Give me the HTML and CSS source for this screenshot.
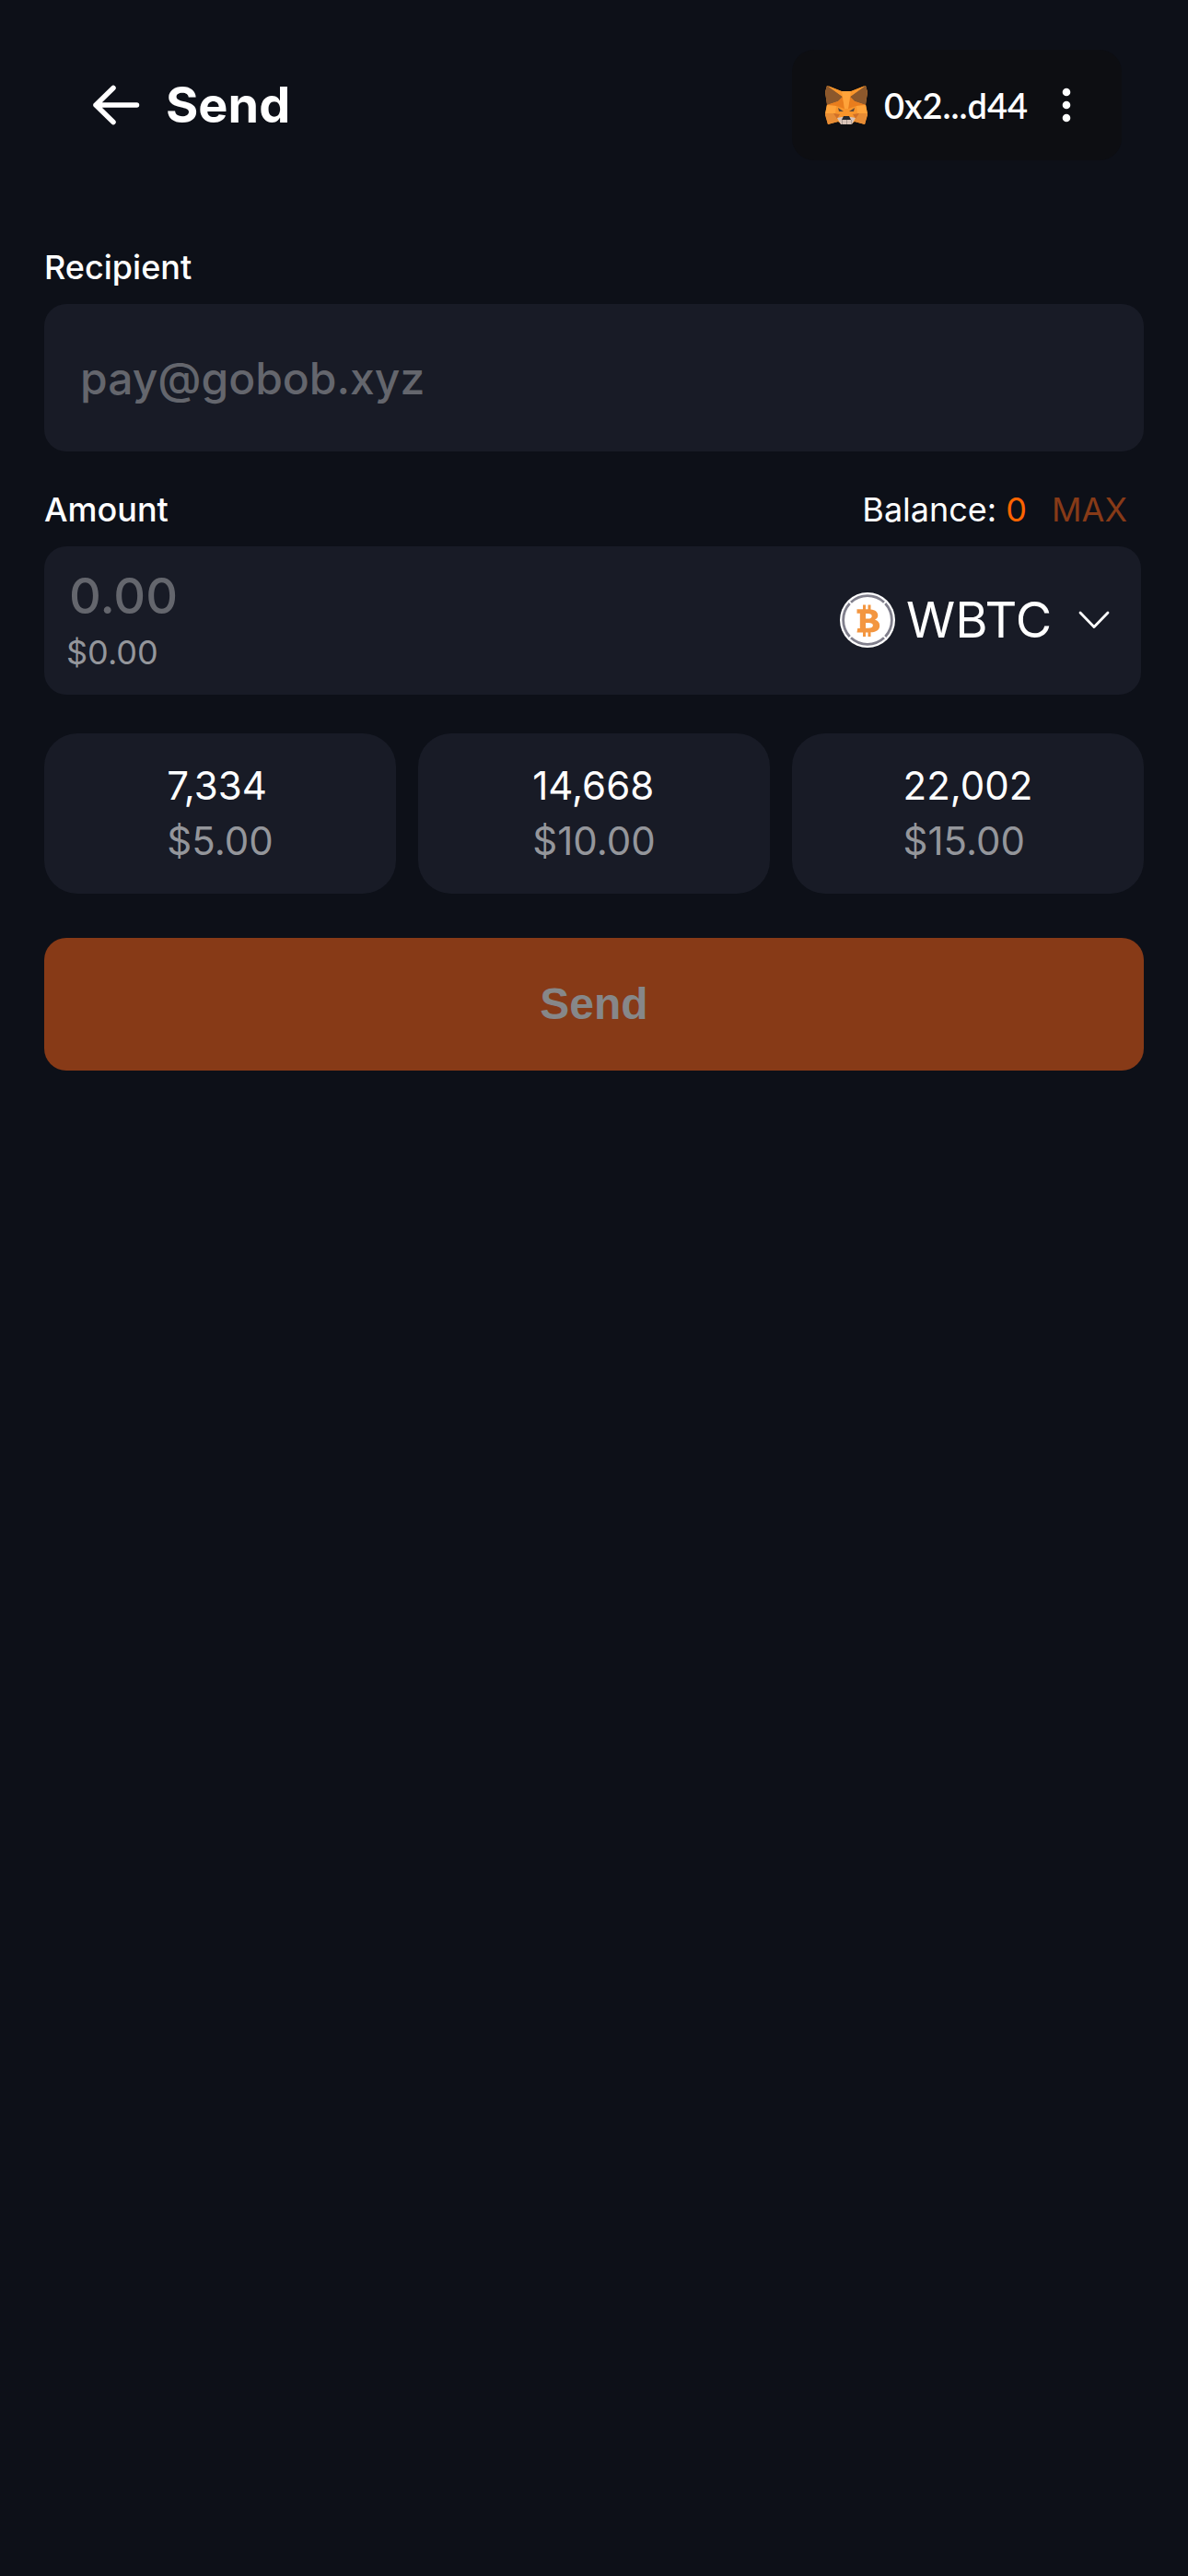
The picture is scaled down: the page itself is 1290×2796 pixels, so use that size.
FILE: index.html
```html
<!DOCTYPE html>
<html lang="en">
<head>
  <meta charset="utf-8">
  <meta name="viewport" content="width=device-width, initial-scale=1">
  <title>Send</title>
  <link rel="stylesheet" href="styles.css">
</head>
<body>
  <header class="topbar">
    <a class="back" href="#" aria-label="Back">
      <svg class="back-icon" viewBox="0 0 60 60" aria-hidden="true"><path d="M52.500 30H8M27 11.500 8 30l19 18.500"/></svg>
    </a>
    <h1 class="title">Send</h1>
    <button class="wallet" type="button">
      <svg class="fox" viewBox="0 0 46 42" aria-hidden="true">
        <path fill="#f8952b" d="M2 0 18 6h10L44 0l2 7-2 13 2 12-3 10-11-3-4 3H18l-4-3-11 3L0 32l2-12L0 7z"/>
        <path fill="#0d0e12" d="M4 0h38L28 6H18z"/>
        <path fill="#8c582c" d="M2 0 19 12 14 17 2 21 0 7zM44 0 27 12l5 5 12 4 2-14z"/>
        <path fill="#f8952b" d="M3 0 18 6l1 6zM43 0 28 6l-1 6z"/>
        <path fill="#e97d1d" d="M14 17 19 12l2 13-9-3-10-1zM32 17l-5-5-2 13 9-3 10-1z"/>
        <path fill="#ffa33a" d="M18 6h10l-3 19h-4zM2 21l10 1-1 8H0zM44 21l-10 1 1 8h11z"/>
        <path fill="#e78c35" d="M0 30h12l2 9-11 3zM46 30H34l-2 9 11 3z"/>
        <path fill="#d07029" d="M9 30l7 1-3 5zM37 30l-7 1 3 5z"/>
        <path fill="#5e4a3b" d="m14 24 6 4-5 0zM32 24l-6 4 5 0z"/>
        <path fill="#d9c4b8" d="m13 35 5-1h10l5 1-4 7H17z"/>
        <path fill="#a89a92" d="M18 37h1v5h-1zM23 37h1v5h-1zM28 37h1v5h-1z"/>
        <path fill="#26292e" d="M20 33h6l2 4H18z"/>
      </svg>
      <span class="address">0x2...d44</span>
      <svg class="dots" viewBox="0 0 48 48" aria-hidden="true"><circle cx="24" cy="10" r="4.300"/><circle cx="24" cy="24" r="4.300"/><circle cx="24" cy="38" r="4.300"/></svg>
    </button>
  </header>

  <form class="form">
    <div class="label-row">
      <label class="label" for="recipient">Recipient</label>
    </div>
    <input class="field recipient" id="recipient" type="text" placeholder="pay@gobob.xyz">

    <div class="label-row amount-row">
      <label class="label" for="amount">Amount</label>
      <span class="balance">Balance: <span class="balance-value">0</span></span>
      <button class="max" type="button" disabled>MAX</button>
    </div>
    <div class="field amount">
      <div class="amount-entry">
        <input class="amount-input" id="amount" type="text" inputmode="decimal" placeholder="0.00">
        <span class="fiat">$0.00</span>
      </div>
      <label class="token">
        <svg class="coin" viewBox="0 0 60 60" aria-hidden="true">
          <circle cx="30" cy="30" r="30" fill="#fff"/>
          <g fill="none" stroke="#807f8c" stroke-width="2.800">
            <path d="M12 10.700a26.500 26.500 0 0 1 36 0M49.300 12a26.500 26.500 0 0 1 0 36M48 49.300a26.500 26.500 0 0 1-36 0M10.700 48a26.500 26.500 0 0 1 0-36"/>
          </g>
          <path fill="#f39640" fill-rule="evenodd" d="M18.500 18.200H25v-4.700h3v4.700h2.500v-4.700h3v4.900c5 .6 7.800 2.800 7.800 6.400 0 2.400-1.200 4-3.300 4.900 3.300.8 5.200 3 5.200 6.200 0 4.400-3.300 7-9.700 7.400V48h-3v-4.500H28V48h-3v-4.500h-6.500l.7-4.500h2.600V22.700h-3.300zM28 23v5.500h2.500c2.700 0 4.200-.9 4.200-2.800S33.200 23 30.500 23zM28 33v5.700h3c3.200 0 4.900-.9 4.900-2.900S34.200 33 31 33z"/>
        </svg>
        <select class="token-select" aria-label="Token"><option>WBTC</option></select>
        <svg class="chevron" viewBox="0 0 36 36" aria-hidden="true"><path d="m3 10 15 15.500L33 10"/></svg>
      </label>
    </div>

    <div class="presets">
      <button class="preset" type="button"><span class="preset-text"><span>7,334</span><span class="preset-fiat">$5.00</span></span></button>
      <button class="preset" type="button"><span class="preset-text"><span>14,668</span><span class="preset-fiat">$10.00</span></span></button>
      <button class="preset" type="button"><span class="preset-text"><span>22,002</span><span class="preset-fiat">$15.00</span></span></button>
    </div>

    <button class="submit" type="submit" disabled>Send</button>
  </form>
</body>
</html>
```

FILE: styles.css
```css
* {
  box-sizing: border-box;
}

body {
  margin: 0;
  min-height: 100vh;
  background: #0d1018;
  color: #fff;
  font-family: Inter, "Liberation Sans", sans-serif;
  font-size: 36px;
  line-height: 48px;
}

button,
input,
select {
  margin: 0;
  padding: 0;
  border: 0;
  background: none;
  color: inherit;
  font: inherit;
}

.topbar {
  display: flex;
  align-items: center;
  gap: 24px;
  padding: 54px 72px 0 96px;
}

.back,
.back-icon {
  display: block;
  width: 60px;
  height: 60px;
}

.back-icon {
  fill: none;
  stroke: #fff;
  stroke-width: 5.5;
  stroke-linecap: round;
  stroke-linejoin: round;
}

.title {
  margin: 0;
  font-size: 54px;
  line-height: 60px;
  font-weight: 700;
}

.wallet {
  display: flex;
  align-items: center;
  gap: 18px;
  height: 120px;
  margin-left: auto;
  padding: 0 36px;
  border-radius: 24px;
  background: #0d0e12;
}

.address {
  font-family: Lato, Inter, sans-serif;
  font-size: 38px;
  font-weight: 600;
}

.fox {
  width: 46px;
  height: 42px;
}

.dots {
  width: 48px;
  height: 48px;
  fill: #fff;
}

.form {
  padding: 92px 48px 48px;
}

.label-row {
  display: flex;
  align-items: center;
  margin-bottom: 16px;
}

.amount-row {
  margin-top: 39px;
  padding-right: 18px;
}

.label {
  font-weight: 500;
}

.balance {
  margin-left: auto;
}

.balance-value {
  color: #ff6400;
}

.max {
  margin-left: 27px;
  color: #873a17;
}

.field {
  border-radius: 24px;
  background: #181b26;
}

.recipient {
  display: block;
  width: 100%;
  height: 160px;
  padding: 0 39px;
  font-size: 48px;
  font-weight: 500;
}

.recipient::placeholder,
.amount-input::placeholder {
  color: #64666d;
  opacity: 1;
}

.amount {
  display: flex;
  align-items: center;
  margin-right: 3px;
  padding: 23px 33px 14px 24px;
}

.amount-entry {
  display: flex;
  flex: 1;
  flex-direction: column;
  min-width: 0;
}

.amount-input {
  width: 100%;
  height: 60px;
  padding: 0 3px;
  font-size: 54px;
  font-weight: 500;
}

.fiat {
  color: #94969b;
  line-height: 64px;
}

.token {
  display: flex;
  align-items: center;
  gap: 12px;
  margin-bottom: 10px;
}

.coin {
  width: 60px;
  height: 60px;
}

.token-select {
  appearance: none;
  height: 66px;
  font-size: 54px;
  line-height: 66px;
}

.chevron {
  width: 36px;
  height: 36px;
  margin-left: 15px;
  fill: none;
  stroke: #fff;
  stroke-width: 2.8;
  stroke-linecap: round;
  stroke-linejoin: round;
}

.presets {
  display: grid;
  grid-template-columns: repeat(3, 1fr);
  gap: 24px;
  margin-top: 42px;
}

.preset {
  display: flex;
  justify-content: center;
  padding: 27px;
  border-radius: 36px;
  background: #181b26;
  font-size: 42px;
  line-height: 60px;
  text-align: left;
}

.preset-text {
  display: flex;
  flex-direction: column;
}

.preset-fiat {
  color: #94969b;
}

.submit {
  display: block;
  width: 100%;
  height: 144px;
  margin-top: 48px;
  border-radius: 24px;
  background: #873a17;
  color: #868789;
  font-family: "Liberation Sans", Arial, sans-serif;
  font-size: 48px;
  font-weight: 700;
}
```
